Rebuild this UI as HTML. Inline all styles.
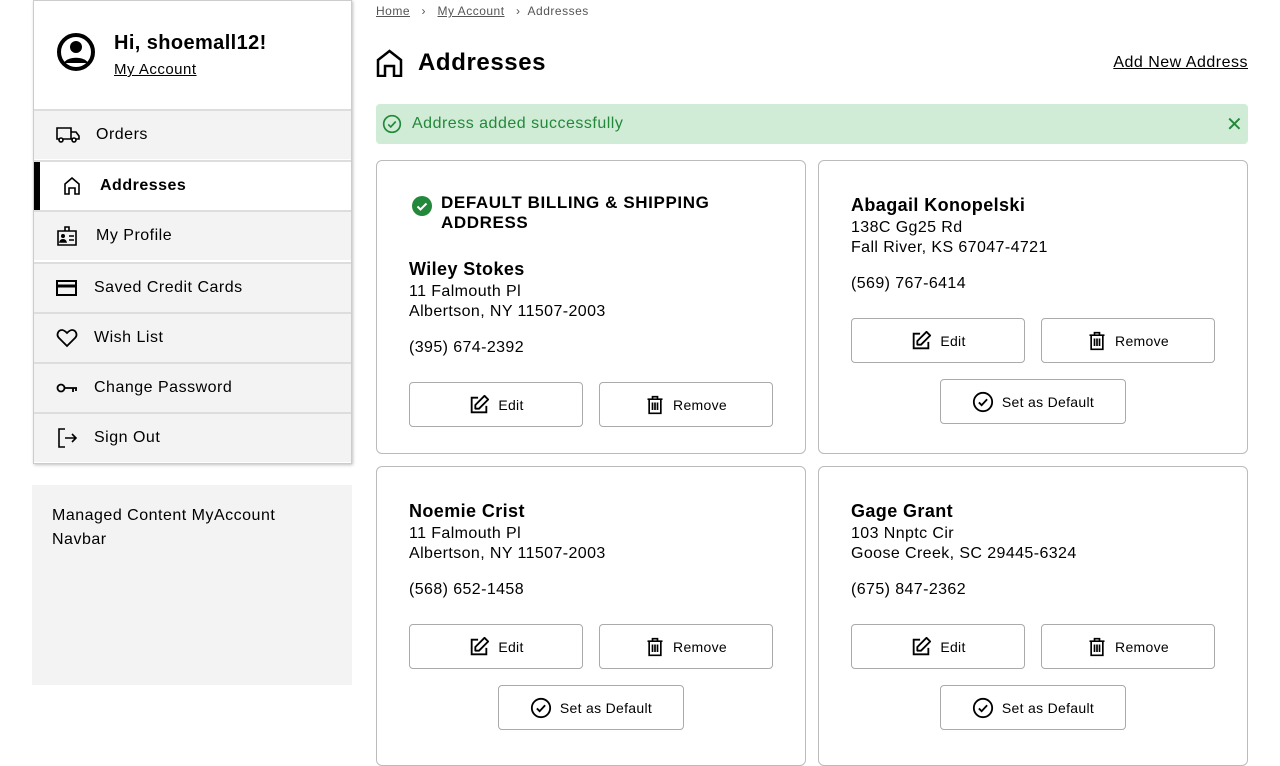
<!DOCTYPE html>
<html><head><meta charset="utf-8"><style>
*{box-sizing:border-box;margin:0;padding:0}
body{width:1280px;height:720px;overflow:hidden;background:#fff;font-family:"Liberation Sans",sans-serif;color:#000;position:relative;letter-spacing:.3px}
.a{position:absolute}
.side{left:33px;top:0;width:319px;height:464px;border:1px solid #ccc;box-shadow:1px 1px 3px rgba(0,0,0,.25);background:#fff}
.item{position:absolute;left:0;width:317px;height:50px;background:#f3f3f3;border-top:2px solid #ddd;font-size:16px;display:flex;align-items:center;letter-spacing:.5px}
.item svg{position:absolute;left:22px}
.item span{position:absolute;left:61px}
.card{position:absolute;width:430px;border:1px solid #bbb;border-radius:6px;background:#fff}
.nm{position:absolute;font-size:18px;font-weight:bold;letter-spacing:.4px}
.tx{position:absolute;font-size:16px;line-height:20px;letter-spacing:.4px}
.btn{position:absolute;height:45px;border:1px solid #aaa;border-radius:4px;background:#fff;font-size:14px;display:flex;align-items:center;justify-content:center;gap:8px;letter-spacing:.3px}
</style></head><body>
<svg width="0" height="0" style="position:absolute"><defs>
<symbol id="ed" viewBox="0 0 24 24"><path d="M11 4H4v16h16v-7" fill="none" stroke="#000" stroke-width="2"/><path d="M18 2l4 4-10 10H8v-4z" fill="none" stroke="#000" stroke-width="2" stroke-linejoin="round"/></symbol>
<symbol id="tr" viewBox="0 0 24 24"><path d="M3 5h18M9 5V2h6v3M5 5v17h14V5M9 9v9M12 9v9M15 9v9" fill="none" stroke="#000" stroke-width="2"/></symbol>
<symbol id="ck" viewBox="0 0 24 24"><circle cx="12" cy="12" r="10" fill="none" stroke="currentColor" stroke-width="2"/><path d="M7.5 12.5l3 3 6-6.5" fill="none" stroke="currentColor" stroke-width="2"/></symbol>
</defs></svg>

<div class="a side">
 <svg class="a" style="left:22px;top:31px" width="40" height="40" viewBox="0 0 40 40"><circle cx="20" cy="20" r="17" fill="none" stroke="#000" stroke-width="4"/><circle cx="20" cy="15" r="6" fill="#000"/><path d="M8 31c3-7 21-7 24 0" fill="#000"/></svg>
 <div class="a" style="left:80px;top:31px;font-size:20px;font-weight:bold;letter-spacing:.4px">Hi, shoemall12!</div>
 <div class="a" style="left:80px;top:60px;font-size:15px;text-decoration:underline;letter-spacing:.5px">My Account</div>
 <div class="item" style="top:108px"><svg width="24" height="20" viewBox="0 0 24 20"><path d="M1 3h14v11H1zM15 7h5l3 4v3h-8" fill="none" stroke="#000" stroke-width="1.6"/><circle cx="5" cy="15" r="2" fill="#fff" stroke="#000" stroke-width="1.6"/><circle cx="18" cy="15" r="2" fill="#fff" stroke="#000" stroke-width="1.6"/></svg><span style="left:62px">Orders</span></div>
 <div class="item" style="top:159px;background:#fff;font-weight:bold"><div class="a" style="left:0;top:0;width:6px;height:48px;background:#000"></div><svg style="left:29px" width="18" height="18" viewBox="0 0 18 18"><path d="M2 17V7l7-6 7 6v10h-4v-6H6v6z" fill="none" stroke="#000" stroke-width="1.6"/></svg><span style="left:66px">Addresses</span></div>
 <div class="item" style="top:209px"><svg width="22" height="22" viewBox="0 0 22 22"><path d="M2 6h18v14H2zM9 6V2h4v4" fill="none" stroke="#000" stroke-width="1.6"/><circle cx="7" cy="11" r="2" fill="#000"/><path d="M4 17c1-3 5-3 6 0zM13 11h5M13 15h5" stroke="#000" stroke-width="1.5"/></svg><span style="left:62px">My Profile</span></div>
 <div class="item" style="top:261px"><svg width="22" height="18" viewBox="0 0 22 18"><rect x="1" y="2" width="19" height="14" fill="none" stroke="#000" stroke-width="2"/><path d="M1 7h19" stroke="#000" stroke-width="3"/></svg><span style="left:60px">Saved Credit Cards</span></div>
 <div class="item" style="top:311px"><svg width="22" height="20" viewBox="0 0 22 20"><path d="M11 18L3 10C0 7 2 2 6 2c2 0 4 2 5 3 1-1 3-3 5-3 4 0 6 5 3 8z" fill="none" stroke="#000" stroke-width="1.8"/></svg><span style="left:60px">Wish List</span></div>
 <div class="item" style="top:361px"><svg width="22" height="14" viewBox="0 0 22 14"><circle cx="5" cy="7" r="3.5" fill="none" stroke="#000" stroke-width="1.8"/><path d="M9 7h12M17 7v4M20 7v3" stroke="#000" stroke-width="1.8" fill="none"/></svg><span style="left:60px">Change Password</span></div>
 <div class="item" style="top:411px"><svg width="22" height="22" viewBox="0 0 22 22"><path d="M9 2H3v18h6M9 11h11M16 7l4 4-4 4" fill="none" stroke="#000" stroke-width="1.6"/></svg><span style="left:60px">Sign Out</span></div>
</div>
<div class="a" style="left:32px;top:485px;width:320px;height:200px;background:#f3f3f3;padding:19px 20px;font-size:16px;line-height:24px;letter-spacing:.5px">Managed Content MyAccount<br>Navbar</div>

<div class="a" style="left:376px;top:4px;font-size:12px;color:#555;letter-spacing:.5px"><u>Home</u> &nbsp;&nbsp;›&nbsp;&nbsp; <u>My Account</u> &nbsp;&nbsp;›&nbsp; Addresses</div>
<svg class="a" style="left:376px;top:49px" width="27" height="28" viewBox="0 0 27 28"><path d="M2 27V11L13.5 2 25 11v16h-7v-10H9v10z" fill="none" stroke="#000" stroke-width="2.5"/></svg>
<div class="a" style="left:418px;top:49px;font-size:24px;font-weight:bold;letter-spacing:.6px">Addresses</div>
<div class="a" style="right:32px;top:54px;font-size:16px;text-decoration:underline;letter-spacing:.5px">Add New Address</div>

<div class="a" style="left:376px;top:104px;width:872px;height:40px;background:#d0ecd6;border-radius:4px;color:#23883a">
 <svg class="a" style="left:6px;top:10px;color:#23883a" width="20" height="20"><use href="#ck"/></svg>
 <div class="a" style="left:36px;top:11px;font-size:16px;letter-spacing:.5px">Address added successfully</div>
 <div class="a" style="left:850px;top:8px;font-size:20px">✕</div>
</div>

<div class="card" style="left:376px;top:160px;height:294px">
 <svg class="a" style="left:34px;top:34px" width="22" height="22" viewBox="0 0 22 22"><circle cx="11" cy="11" r="10" fill="#23883a"/><path d="M6.5 11.5l3 3 6-6" fill="none" stroke="#fff" stroke-width="2"/></svg>
 <div class="a" style="left:64px;top:32px;font-size:17px;font-weight:bold;line-height:20px;letter-spacing:.6px">DEFAULT BILLING &amp; SHIPPING<br>ADDRESS</div>
 <div class="nm" style="left:32px;top:98px">Wiley Stokes</div>
 <div class="tx" style="left:32px;top:121px">11 Falmouth Pl<br>Albertson, NY 11507-2003</div>
 <div class="tx" style="left:32px;top:177px">(395) 674-2392</div>
 <div class="btn" style="left:32px;top:221px;width:174px"><svg width="22" height="22"><use href="#ed"/></svg>Edit</div>
 <div class="btn" style="left:222px;top:221px;width:174px"><svg width="20" height="20"><use href="#tr"/></svg>Remove</div>
</div>

<div class="card" style="left:818px;top:160px;height:294px">
 <div class="nm" style="left:32px;top:34px">Abagail Konopelski</div>
 <div class="tx" style="left:32px;top:57px">138C Gg25 Rd<br>Fall River, KS 67047-4721</div>
 <div class="tx" style="left:32px;top:113px">(569) 767-6414</div>
 <div class="btn" style="left:32px;top:157px;width:174px"><svg width="22" height="22"><use href="#ed"/></svg>Edit</div>
 <div class="btn" style="left:222px;top:157px;width:174px"><svg width="20" height="20"><use href="#tr"/></svg>Remove</div>
 <div class="btn" style="left:121px;top:218px;width:186px"><svg width="22" height="22"><use href="#ck"/></svg>Set as Default</div>
</div>

<div class="card" style="left:376px;top:466px;height:300px">
 <div class="nm" style="left:32px;top:34px">Noemie Crist</div>
 <div class="tx" style="left:32px;top:57px">11 Falmouth Pl<br>Albertson, NY 11507-2003</div>
 <div class="tx" style="left:32px;top:113px">(568) 652-1458</div>
 <div class="btn" style="left:32px;top:157px;width:174px"><svg width="22" height="22"><use href="#ed"/></svg>Edit</div>
 <div class="btn" style="left:222px;top:157px;width:174px"><svg width="20" height="20"><use href="#tr"/></svg>Remove</div>
 <div class="btn" style="left:121px;top:218px;width:186px"><svg width="22" height="22"><use href="#ck"/></svg>Set as Default</div>
</div>

<div class="card" style="left:818px;top:466px;height:300px">
 <div class="nm" style="left:32px;top:34px">Gage Grant</div>
 <div class="tx" style="left:32px;top:57px">103 Nnptc Cir<br>Goose Creek, SC 29445-6324</div>
 <div class="tx" style="left:32px;top:113px">(675) 847-2362</div>
 <div class="btn" style="left:32px;top:157px;width:174px"><svg width="22" height="22"><use href="#ed"/></svg>Edit</div>
 <div class="btn" style="left:222px;top:157px;width:174px"><svg width="20" height="20"><use href="#tr"/></svg>Remove</div>
 <div class="btn" style="left:121px;top:218px;width:186px"><svg width="22" height="22"><use href="#ck"/></svg>Set as Default</div>
</div>
</body></html>
